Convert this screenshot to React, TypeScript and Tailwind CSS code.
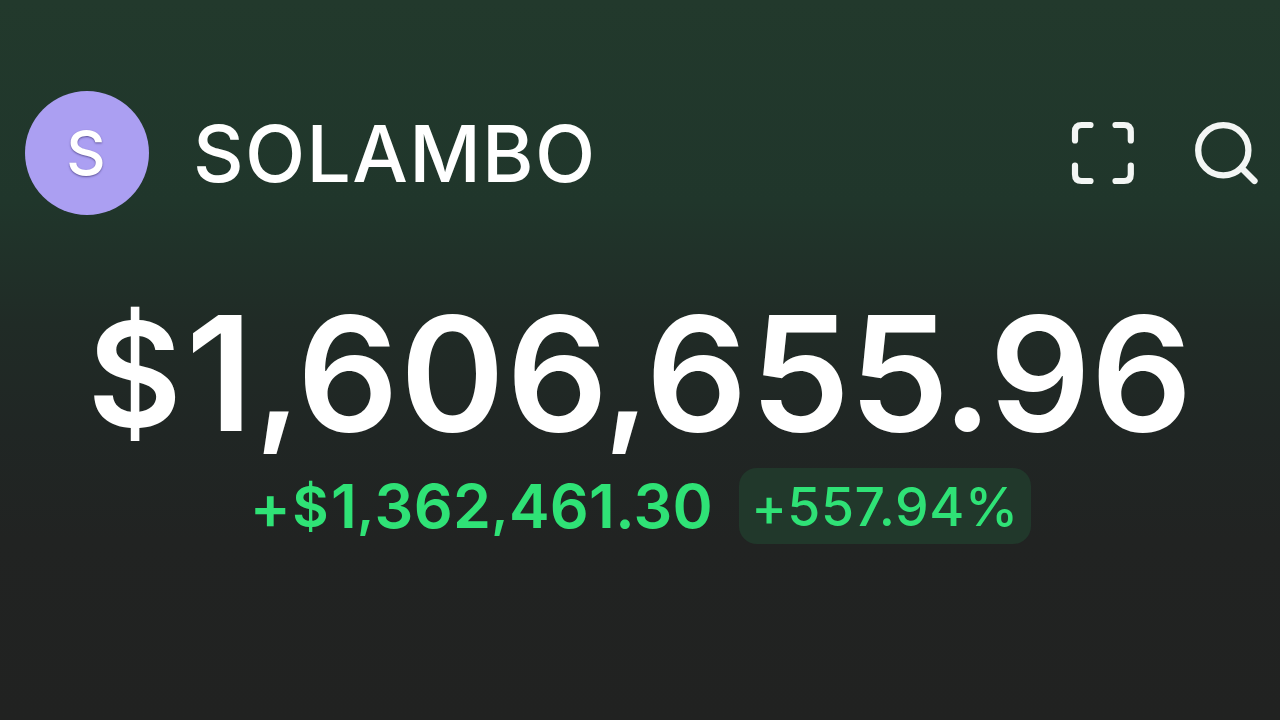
export default function App() {
  return (
    <main className="flex h-[720px] w-[1280px] flex-col overflow-hidden bg-[linear-gradient(to_bottom,#22392c_0%,#20362b_28%,#202b26_45%,#202624_60%,#212322_75%,#212221_100%)] font-['Inter',sans-serif] text-white">
      <header className="flex items-center pt-[91px] pr-[20px] pl-[25px]">
        <div className="flex size-[124px] items-center justify-center rounded-full bg-[#ab9ff2] pr-[2px] text-[61px] leading-[124px] font-[460] [text-shadow:0_1px_2px_rgba(40,30,90,0.6)]">S</div>
        <h1 className="ml-[44px] pt-[2px] text-[78.5px] leading-[122px] font-[480] tracking-[1.3px] whitespace-nowrap">SOLAMBO</h1>
        <div className="ml-auto flex items-center gap-[58px]">
          <svg className="size-[66px]" viewBox="0 0 66 66" fill="none" stroke="#f3f6f4" strokeWidth="6.2" strokeLinecap="round">
            <path d="M5 20.5V11.7Q5 5 11.7 5H20.5M45.5 5H54.1Q60.8 5 60.8 11.7V20.5M60.8 45.5V54.3Q60.8 61 54.1 61H45.5M20.5 61H11.7Q5 61 5 54.3V45.5" />
          </svg>
          <svg className="size-[66px]" viewBox="0 0 66 66" fill="none" stroke="#f3f6f4" strokeWidth="6.3" strokeLinecap="round">
            <circle cx="29.3" cy="30.2" r="25.1" />
            <path d="M47.5 48L60.5 61" />
          </svg>
        </div>
      </header>
      <section className="flex flex-col items-center">
        <p className="mt-[75px] h-[168px] text-[159px] leading-[166px] font-semibold whitespace-nowrap">
          <span className="mr-[4px] align-[4px] text-[145px] leading-none">$</span>1
          <span className="ml-[2px] align-[4px] text-[144px] leading-none tracking-[-4px]">,</span>
          <span className="tracking-[1.5px]">60</span>
          <span className="tracking-[-4.5px]">6</span>
          <span className="align-[4px] text-[144px] leading-none tracking-[-4px]">,</span>
          <span className="mr-[3px]">6</span>
          <span className="tracking-[-1px]">5</span>
          <span className="tracking-[-3.5px]">5.</span>96
        </p>
        <div className="mt-[10px] flex items-center gap-[26px] pl-[1px] whitespace-nowrap text-[#2fe276]">
          <span className="h-[76px] text-[61px] leading-[77px] font-[580] tracking-[0.3px]">
            <span className="mr-[1px] align-[-1px] leading-none">+</span>
            <span className="mr-[2px] align-[1px] text-[56px] leading-none">$</span>1
            <span className="align-[2px] text-[54px] leading-none">,</span>362
            <span className="align-[2px] text-[54px] leading-none">,</span>461.30
          </span>
          <span className="h-[76px] w-[292px] rounded-[18px] bg-[#21382b] pl-[12px] text-[53.5px] leading-[77px] font-[540] tracking-[0.5px]">
            <span className="leading-none">+</span>557.94%
          </span>
        </div>
      </section>
    </main>
  );
}
